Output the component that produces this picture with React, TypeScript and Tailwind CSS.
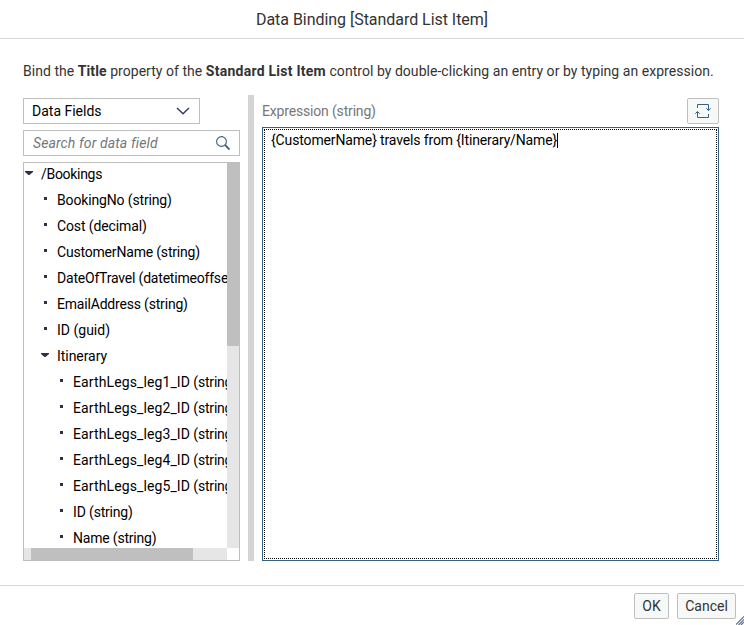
import React from 'react';

type Row = { name: string; type?: string; level: number; branch?: boolean; tracking?: string };

const rows: Row[] = [
  { name: '/Bookings', level: 0, branch: true, tracking: 'tracking-[-0.3px]' },
  { name: 'BookingNo', type: '(string)', level: 1, tracking: 'tracking-[-0.15px]' },
  { name: 'Cost', type: '(decimal)', level: 1, tracking: 'tracking-[-0.12px]' },
  { name: 'CustomerName', type: '(string)', level: 1, tracking: 'tracking-[-0.19px]' },
  { name: 'DateOfTravel', type: '(datetimeoffset)', level: 1, tracking: 'tracking-[-0.2px]' },
  { name: 'EmailAddress', type: '(string)', level: 1, tracking: 'tracking-[-0.19px]' },
  { name: 'ID', type: '(guid)', level: 1 },
  { name: 'Itinerary', level: 1, branch: true, tracking: 'tracking-[-0.05px]' },
  { name: 'EarthLegs_leg1_ID', type: '(string)', level: 2, tracking: 'tracking-[0.11px]' },
  { name: 'EarthLegs_leg2_ID', type: '(string)', level: 2, tracking: 'tracking-[0.11px]' },
  { name: 'EarthLegs_leg3_ID', type: '(string)', level: 2, tracking: 'tracking-[0.11px]' },
  { name: 'EarthLegs_leg4_ID', type: '(string)', level: 2, tracking: 'tracking-[0.11px]' },
  { name: 'EarthLegs_leg5_ID', type: '(string)', level: 2, tracking: 'tracking-[0.11px]' },
  { name: 'ID', type: '(string)', level: 2, tracking: 'tracking-[-0.1px]' },
  { name: 'Name', type: '(string)', level: 2, tracking: 'tracking-[-0.2px]' },
];

const indents = ['pl-0', 'pl-4', 'pl-8'];

function TreeRow({ name, type, level, branch, tracking = '' }: Row) {
  return (
    <li className={`flex h-[26px] shrink-0 items-center whitespace-nowrap ${indents[level]}`}>
      <span className="flex w-[17px] shrink-0">
        {branch ? (
          <svg className="mb-[3px] ml-px" width="8" height="4" viewBox="0 0 8 4">
            <path d="M0 0h8v1L4.5 4h-1L0 1z" fill="#2c3049" />
          </svg>
        ) : (
          <span className="mb-1 ml-1 size-[3px] bg-[#2c3049]" />
        )}
      </span>
      <span className={tracking}>
        {name}
        {type && <span className={level === 2 ? 'tracking-[-0.2px]' : ''}> {type}</span>}
      </span>
    </li>
  );
}

export default function App() {
  return (
    <div className="flex h-[625px] w-[744px] flex-col overflow-hidden bg-white font-[Roboto,'Liberation_Sans',sans-serif] text-[14px] leading-[18px] text-black">
      <header className="flex h-[39px] shrink-0 items-center justify-center border-b border-[#d9d9d9] pt-[2px] text-[16px] text-[#333]">
        <h1 className="tracking-[-0.04px]">Data Binding [Standard List Item]</h1>
      </header>

      <main className="flex h-[546px] shrink-0 flex-col px-[23px] pt-[23px]">
        <p className="h-[33px] shrink-0 tracking-[0.04px] whitespace-nowrap text-[#333]">
          Bind the <b className="tracking-[0.1px]">Title</b> property of the{' '}
          <b className="tracking-[0.25px]">Standard List Item</b> control by double-clicking an entry or by typing an expression.
        </p>
        <div className="flex h-[466px]">
          <section className="flex w-[217px] shrink-0 flex-col gap-[6px] pt-[3px]">
            <div className="flex h-[26px] w-[177px] shrink-0 items-center justify-between border border-[#bfbfbf] pr-[9px] pl-2">
              <span>Data Fields</span>
              <svg width="14" height="8" viewBox="0 0 14 8" fill="none">
                <path d="M1 1l6 5.8L13 1" stroke="#34415e" strokeWidth="1.5" />
              </svg>
            </div>
            <div className="flex h-[26px] shrink-0 items-center justify-between border border-[#bfbfbf] pr-[9px] pl-[9px] text-[#74777a] italic">
              <span className="tracking-[0.12px]">Search for data field</span>
              <svg width="14" height="14" viewBox="0 0 14 14" fill="none" stroke="#346187">
                <circle cx="5.5" cy="5.5" r="4.9" strokeWidth="1.1" />
                <path d="M9.2 9.2l4.3 4.3" strokeWidth="1.9" />
              </svg>
            </div>
            <div className="flex h-[399px] shrink-0 flex-col border border-[#bfbfbf]">
              <div className="flex h-[385px] shrink-0">
                <ul className="-mt-[2px] flex h-[387px] w-[203px] shrink-0 flex-col overflow-hidden">
                  {rows.map((row) => (
                    <TreeRow key={`${row.level}-${row.name}`} {...row} />
                  ))}
                </ul>
                <div className="w-3 shrink-0 bg-[#e6e6e6]">
                  <div className="h-[183px] rounded-b-[1px] bg-[#bfbfbf]" />
                </div>
              </div>
              <div className="h-3 w-[203px] bg-[#e6e6e6] pl-[7px]">
                <div className="h-3 w-[162px] rounded-[1px] bg-[#bfbfbf]" />
              </div>
            </div>
          </section>

          <div className="mr-2 ml-2 w-[6px] shrink-0 bg-[#d4d4d4]" />

          <section className="flex w-[457px] shrink-0 flex-col pt-[3px]">
            <div className="flex h-[29px] shrink-0 items-start justify-between">
              <span className="pt-1 tracking-[-0.17px] text-[#777]">Expression (string)</span>
              <button className="flex h-[26px] w-8 items-center justify-center rounded-[2px] border border-[#bfbfbf] bg-[#f7f9f9]">
                <svg width="16" height="16" viewBox="0 0 16 16" fill="none" stroke="#346187" strokeWidth="1">
                  <path d="M2.5 5V1.5h11v6M11.3 5.3l2.2 2.2 2.2-2.2M13.5 11v3.5h-11v-6M.3 10.7l2.2-2.2 2.2 2.2" />
                </svg>
              </button>
            </div>
            <div className="h-[434px] shrink-0 border border-[#346187] p-px">
              <div className="flex h-full items-start border border-dotted border-black pt-px pl-[6px]">
                <span className="tracking-[-0.14px]">{'{CustomerName} travels from {Itinerary/Name}'}</span>
                <span className="mt-[2px] h-[15px] w-px bg-black" />
              </div>
            </div>
          </section>
        </div>
      </main>

      <footer className="relative flex h-10 shrink-0 items-start justify-end gap-2 border-t border-[#d9d9d9] pt-[7px] pr-2 text-[#333]">
        <button className="h-[26px] w-[35px] rounded-[2px] border border-[#bfbfbf] bg-[#f7f9f9]">OK</button>
        <button className="h-[26px] w-[59px] rounded-[2px] border border-[#bfbfbf] bg-[#f7f9f9]">Cancel</button>
        <svg className="absolute right-0 bottom-0" width="8" height="9" viewBox="0 0 8 9" stroke="#5f7388" strokeWidth="1.2">
          <path d="M0 8.5L8 .5M2.5 9L8 3.5M5 9l3-3" />
        </svg>
      </footer>
    </div>
  );
}
